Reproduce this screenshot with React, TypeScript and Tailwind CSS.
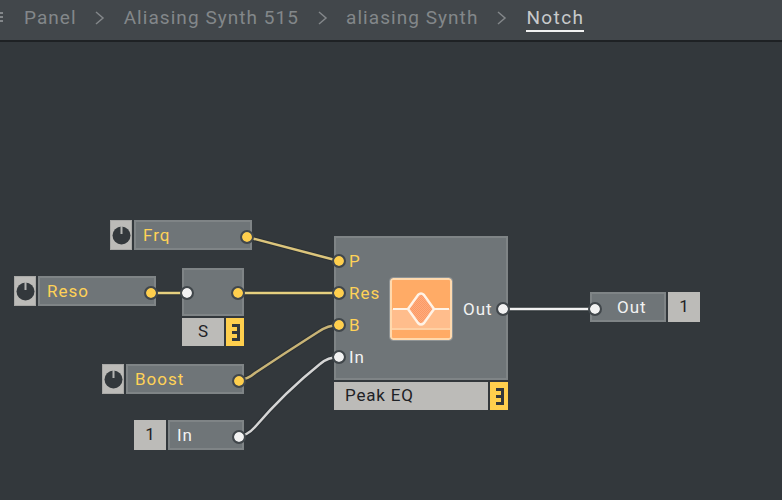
import type { ReactNode } from "react";

function Port({ white, className = "" }: { white?: boolean; className?: string }) {
  return (
    <div
      className={`relative z-10 h-[10px] w-[10px] shrink-0 rounded-full outline-2 outline-[#41474b] ${white ? "bg-[#f2f2f2]" : "bg-[#ffcf4d]"} ${className}`}
    />
  );
}

function Knob() {
  return (
    <div className="flex h-[30px] w-[22px] items-center justify-center border border-[#a9a9a7] bg-[#bcbbb8]">
      <svg width="19" height="19" viewBox="0 0 19 19">
        <circle cx="9.5" cy="9.5" r="9" fill="#33383c" />
        <rect x="8.5" y="0" width="2" height="8" fill="#b3b3b1" />
      </svg>
    </div>
  );
}

function Fold() {
  return (
    <div className="flex h-[28px] w-[18px] items-center justify-center bg-[#ffcf4d]">
      <svg width="8" height="17" viewBox="0 0 8 17" fill="#33383c" className="mt-[1px] ml-[2px]">
        <rect x="0" y="0" width="8" height="3" />
        <rect x="0" y="7" width="8" height="3" />
        <rect x="0" y="14" width="8" height="3" />
        <rect x="5" y="0" width="3" height="17" />
      </svg>
    </div>
  );
}

function Value({ w, children }: { w: number; children: ReactNode }) {
  return (
    <div className="flex h-[30px] items-center justify-center bg-[#bcbbb8] text-[17px] text-[#1f2226]" style={{ width: w }}>
      {children}
    </div>
  );
}

function Node({ x, y, children, className = "" }: { x: number; y: number; children: ReactNode; className?: string }) {
  return (
    <div className={`absolute flex gap-[2px] ${className}`} style={{ left: x, top: y }}>
      {children}
    </div>
  );
}

function Param({ x, y, w = 118, white, knob, children }: { x: number; y: number; w?: number; white?: boolean; knob?: boolean; children: ReactNode }) {
  return (
    <Node x={x} y={y}>
      {knob ? <Knob /> : <Value w={32}>1</Value>}
      <div
        className={`flex h-[30px] items-center justify-between border-2 border-[#7f8486] bg-[#6f7578] pl-[7px] text-[17px] leading-[20px] tracking-[1px] ${white ? "text-[#f2f2f2]" : "text-[#ffd257]"}`}
        style={{ width: w }}
      >
        <span>{children}</span>
        <Port white={white} className="-mr-[2px] mt-[4px]" />
      </div>
    </Node>
  );
}

function PeakIcon() {
  return (
    <div className="mt-[2px] h-[62px] w-[62px] rounded-[3px] border-2 border-[#ffd9ad] bg-[#ffab66] outline outline-[#8f9496]">
      <svg width="58" height="58" viewBox="0 0 58 58" className="block">
        <defs>
          <pattern id="dots" width="2" height="2" patternUnits="userSpaceOnUse">
            <rect width="2" height="2" fill="#ffab7c" />
            <rect width="1" height="1" fill="#fb9a66" />
            <rect x="1" y="1" width="1" height="1" fill="#fb9a66" />
          </pattern>
        </defs>
        <rect x="0" y="29" width="58" height="19" fill="#ffbd8c" />
        <rect x="0" y="48" width="58" height="2" fill="#ffd0a3" />
        <path d="M16 29 L26 15 Q29 12 32 15 L42 29 L32 43 Q29 46 26 43 Z" fill="url(#dots)" stroke="#fff3e6" strokeWidth="2.5" />
        <path d="M1 29 H16 M42 29 H57" stroke="#fff3e6" strokeWidth="2" />
      </svg>
    </div>
  );
}

const crumbs = ["Panel", "Aliasing Synth 515", "aliasing Synth"];
const inputs = [
  { name: "P" },
  { name: "Res" },
  { name: "B" },
  { name: "In", white: true },
];
const wires = [
  { d: "M247 237 L339 261", color: "#dcc57c" },
  { d: "M151 293 H187", color: "#e6d07f" },
  { d: "M238 293 H339", color: "#e6d07f" },
  { d: "M238 380 Q247 380 255 373 Q285 353 318 332 Q328 325 339 325", color: "#c9b476" },
  { d: "M238 436 Q247 436 255 427 Q285 392 320 364 Q328 357 339 357", color: "#d5d5d5" },
  { d: "M503 309 H595", color: "#f2f2f2" },
];

export default function App() {
  return (
    <div className="relative h-[500px] w-[782px] overflow-hidden bg-[#33383c] font-['Roboto',sans-serif]">
      <div className="flex h-[42px] items-start border-b-2 border-[#1e2124] bg-[#42474b] pt-[5px] text-[19px] leading-[25px] tracking-[1.05px] text-[#83878a]">
        <div className="mt-[7px] mr-[21px] flex w-[3px] flex-col gap-[2px]">
          <div className="h-[2px] bg-[#83878a]" />
          <div className="h-[2px] bg-[#83878a]" />
          <div className="h-[2px] bg-[#83878a]" />
        </div>
        {crumbs.map((c) => (
          <div key={c} className="flex items-center">
            <span>{c}</span>
            <svg className="mx-[18.5px]" width="10" height="16" viewBox="0 0 10 16" fill="none" stroke="#83878a" strokeWidth="1.5">
              <path d="M1 2 L8 8 L1 14" />
            </svg>
          </div>
        ))}
        <span className="ml-[1px] border-b-2 border-[#f2f2f2] tracking-[1.4px] text-[#c8cacb]">Notch</span>
      </div>

      <Param x={110} y={220} knob>Frq</Param>
      <Param x={14} y={276} knob>Reso</Param>
      <Param x={102} y={364} knob>Boost</Param>
      <Param x={134} y={420} w={76} white>In</Param>

      {/* switch */}
      <Node x={182} y={268} className="w-[62px] flex-col">
        <div className="flex h-[48px] items-center justify-between border-2 border-[#7f8486] bg-[#6f7578]">
          <Port white className="-ml-[2px] mt-[2px]" />
          <Port className="-mr-[1px] mt-[2px]" />
        </div>
        <div className="flex gap-[2px]">
          <div className="flex h-[28px] w-[42px] items-center justify-center bg-[#bcbbb8] text-[17px] text-[#1f2226]">S</div>
          <Fold />
        </div>
      </Node>

      {/* Peak EQ */}
      <Node x={334} y={236} className="w-[174px] flex-col">
        <div className="flex h-[144px] items-center border-2 border-[#7f8486] bg-[#6f7578] text-[17px] leading-[20px] tracking-[1px]">
          <div className="flex w-[54px] flex-col gap-[12px] pt-[2px]">
            {inputs.map((p) => (
              <div key={p.name} className={`flex h-[20px] items-center gap-[5px] ${p.white ? "text-[#f2f2f2]" : "text-[#ffd257]"}`}>
                <Port white={p.white} className="-ml-[2px]" />
                <span className="-mt-[1px]">{p.name}</span>
              </div>
            ))}
          </div>
          <PeakIcon />
          <div className="ml-[11px] flex flex-1 items-center justify-between pt-[2px] text-[#f2f2f2]">
            <span className="-mt-[1px]">Out</span>
            <Port white className="-mr-[2px]" />
          </div>
        </div>
        <div className="flex gap-[2px]">
          <div className="flex h-[28px] w-[154px] items-center bg-[#bcbbb8] pl-[11px] text-[17px] tracking-[0.8px] text-[#1f2226]">Peak EQ</div>
          <Fold />
        </div>
      </Node>

      {/* Out */}
      <Node x={590} y={292}>
        <div className="flex h-[30px] w-[76px] items-center border-2 border-[#7f8486] bg-[#6f7578] text-[17px] leading-[20px] tracking-[1px] text-[#f2f2f2]">
          <Port white className="-ml-[2px] mt-[4px]" />
          <span className="ml-[17px]">Out</span>
        </div>
        <Value w={32}>1</Value>
      </Node>

      <svg className="pointer-events-none absolute top-0 left-0" width="782" height="500" fill="none">
        {wires.map((w) => (
          <g key={w.d}>
            <path d={w.d} stroke="#1e2124" strokeOpacity="0.35" strokeWidth="4.5" />
            <path d={w.d} stroke={w.color} strokeWidth="2.5" />
          </g>
        ))}
      </svg>
    </div>
  );
}
